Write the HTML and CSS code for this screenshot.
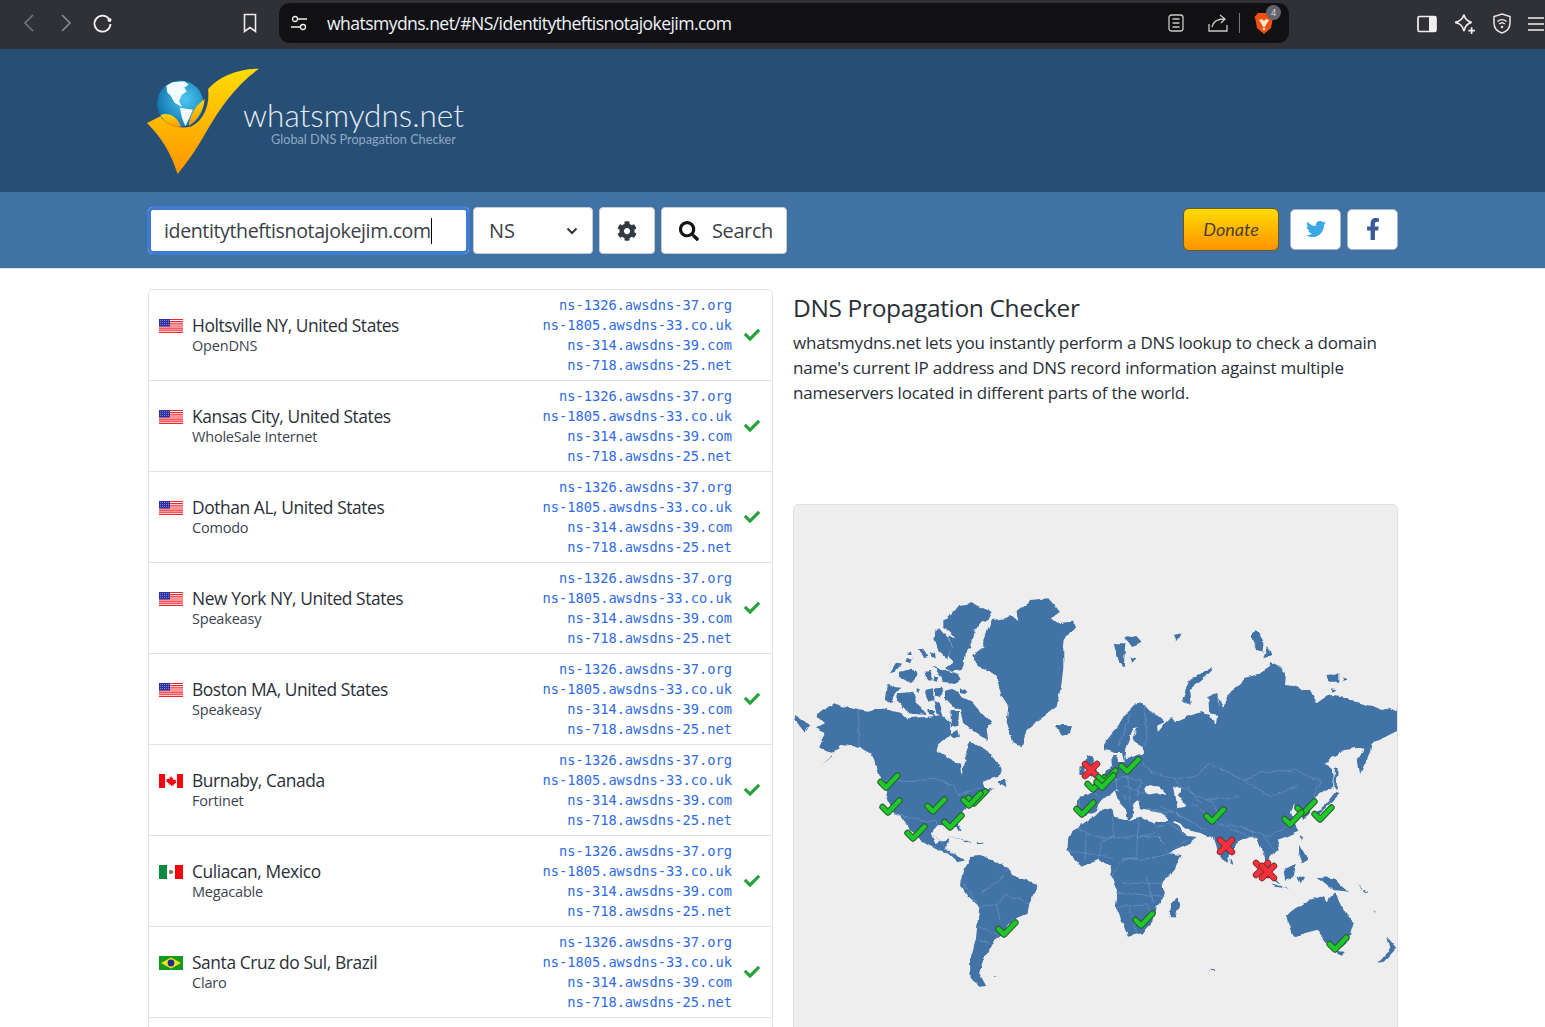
FILE: index.html
```html
<!DOCTYPE html>
<html lang="en">
<head>
<meta charset="utf-8">
<title>whatsmydns.net</title>
<link rel="stylesheet" href="styles.css">
</head>
<body>
<svg class="defs" width="0" height="0" aria-hidden="true">
  <defs>
    <symbol id="ok" viewBox="0 0 512 512"><path d="M173.898 439.404l-166.4-166.4c-9.997-9.997-9.997-26.206 0-36.204l36.203-36.204c9.997-9.998 26.207-9.998 36.204 0L192 312.69 432.095 72.596c9.997-9.997 26.207-9.997 36.204 0l36.203 36.204c9.997 9.997 9.997 26.206 0 36.204l-294.4 294.401c-9.998 9.997-26.207 9.997-36.204-.001z"/></symbol>
    <symbol id="us" viewBox="0 0 24 14">
      <rect width="24" height="14" fill="#fff"/>
      <path d="M0 .5h24M0 2.7h24M0 4.8h24M0 7h24M0 9.1h24M0 11.2h24M0 13.4h24" stroke="#f0262c" stroke-width="1.2"/>
      <rect width="11" height="7.5" fill="#2b2fa8"/>
      <path d="M1 1.5h9M1 3.5h9M1 5.5h9" stroke="#aab" stroke-width=".7" stroke-dasharray="1 1"/>
    </symbol>
    <symbol id="ca" viewBox="0 0 24 14">
      <rect width="24" height="14" fill="#fff"/>
      <rect width="6" height="14" fill="#f5070f"/><rect x="18" width="6" height="14" fill="#f5070f"/>
      <path d="M12 2l1 2 1.200-.6-.5 2.800 1.500-1 .5 1 1.500-.2-.5 1.800.7.500-2.900 2.200.2 1.200-2.200-.3V12h-.6v-1.600l-2.200.3.200-1.200-2.900-2.200.7-.5-.5-1.800 1.500.2.500-1 1.500 1-.5-2.800L11 4z" fill="#f5070f"/>
    </symbol>
    <symbol id="mx" viewBox="0 0 24 14">
      <rect width="24" height="14" fill="#fff"/>
      <rect width="8" height="14" fill="#0a8a3e"/><rect x="16" width="8" height="14" fill="#f5070f"/>
      <circle cx="12" cy="7" r="2" fill="#7d6a4f"/>
    </symbol>
    <symbol id="br" viewBox="0 0 24 14">
      <rect width="24" height="14" fill="#149a1e"/>
      <path d="M12 1.500L22 7 12 12.500 2 7z" fill="#f7e017"/>
      <circle cx="12" cy="7" r="3.400" fill="#1b2f8f"/>
    </symbol>
    <symbol id="mk-ok" viewBox="0 0 24 20">
      <path d="M3.500 11l5.500 5.500L20.500 4.500" fill="none" stroke="#2c5b2f" stroke-width="6.400" stroke-linecap="round" stroke-linejoin="round"/>
      <path d="M3.500 11l5.500 5.500L20.500 4.500" fill="none" stroke="#1fc82a" stroke-width="4.400" stroke-linecap="round" stroke-linejoin="round"/>
    </symbol>
    <symbol id="mk-no" viewBox="0 0 20 20">
      <path d="M4 4l12 12M16 4L4 16" fill="none" stroke="#7a2a2a" stroke-width="6.400" stroke-linecap="round"/>
      <path d="M4 4l12 12M16 4L4 16" fill="none" stroke="#f5303a" stroke-width="4.600" stroke-linecap="round"/>
    </symbol>
    <linearGradient id="logo-gold" x1="0" y1="0" x2="0" y2="1">
      <stop offset="0" stop-color="#ffdc00"/><stop offset="1" stop-color="#ff9500"/>
    </linearGradient>
    <radialGradient id="logo-globe" cx=".6" cy=".4" r=".7">
      <stop offset="0" stop-color="#4cc8f0"/><stop offset="1" stop-color="#0c6aa8"/>
    </radialGradient>
    <filter id="rough" x="0" y="0" width="1" height="1" color-interpolation-filters="sRGB">
      <feTurbulence type="fractalNoise" baseFrequency=".13" numOctaves="2" seed="4"/>
      <feDisplacementMap in="SourceGraphic" scale="4.500" xChannelSelector="R" yChannelSelector="G"/>
    </filter>
  </defs>
</svg>

<div class="page">
  <div class="chrome">
    <div class="nav-icons">
      <svg class="ic" width="22" height="24" viewBox="0 0 22 24"><path d="M15 4L7 12l8 8" fill="none" stroke="#77787d" stroke-width="1.600"/></svg>
      <svg class="ic" width="22" height="24" viewBox="0 0 22 24"><path d="M7 4l8 8-8 8" fill="none" stroke="#8a8b90" stroke-width="1.600"/></svg>
      <svg class="ic" width="22" height="24" viewBox="0 0 22 24"><path d="M17 8a8 8 0 1 0 1.500 5" fill="none" stroke="#f2f2f2" stroke-width="1.800"/><circle cx="17.500" cy="9" r="2" fill="#f2f2f2"/></svg>
    </div>
    <svg class="ic bookmark" width="16" height="20" viewBox="0 0 16 20"><path d="M2.500 1.500h11v17L8 14.500l-5.500 4z" fill="none" stroke="#ececec" stroke-width="1.600"/></svg>
    <div class="urlbar">
      <svg class="ic" width="18" height="16" viewBox="0 0 18 16"><circle cx="5" cy="4" r="2.500" fill="none" stroke="#eee" stroke-width="1.300"/><path d="M8 4h9M1 12h9" stroke="#eee" stroke-width="1.300"/><circle cx="13" cy="12" r="2.500" fill="none" stroke="#eee" stroke-width="1.300"/></svg>
      <span class="url">whatsmydns.net/#NS/identitytheftisnotajokejim.com</span>
      <span class="url-actions">
        <svg class="ic" width="16" height="18" viewBox="0 0 16 18"><rect x="1" y="1" width="14" height="16" rx="2.500" fill="none" stroke="#c9c9c9" stroke-width="1.300"/><path d="M4.500 5h7M4.500 9h7M4.500 13h7" stroke="#c9c9c9" stroke-width="1.300"/></svg>
        <svg class="ic" width="20" height="18" viewBox="0 0 20 18"><path d="M1 10v7h18v-6" fill="none" stroke="#c9c9c9" stroke-width="1.300"/><path d="M4 13c1-5 5-8 12-8M12 1l5 4-4 4" fill="none" stroke="#c9c9c9" stroke-width="1.300"/></svg>
        <span class="sep"></span>
        <span class="brave">
          <svg class="ic" width="20" height="23" viewBox="0 0 20 23"><path d="M4 1h12l3.500 4-1 3-1.500 8-7 6-7-6-1.500-8-1-3z" fill="#f0500f"/><path d="M5 8l3-1 2 2 2-2 3 1-2.500 4L10 16l-2.500-4zM8 17l2 1.500 2-1.500-2-1z" fill="#ffe3d3"/></svg>
          <span class="badge">4</span>
        </span>
      </span>
    </div>
    <div class="tool-icons">
      <svg class="ic" width="20" height="18" viewBox="0 0 20 18"><rect x="1" y="1.500" width="18" height="15" rx="1.500" fill="none" stroke="#f0f0f0" stroke-width="1.700"/><rect x="12" y="1.500" width="7" height="15" fill="#f0f0f0"/></svg>
      <svg class="ic" width="22" height="22" viewBox="0 0 20 20"><path d="M9 1.500c1 4 3 6 7 7-4 1-6 3-7 8-1-5-3-7-8-8 5-1 7-3 8-7z" fill="none" stroke="#f0f0f0" stroke-width="1.500"/><path d="M16 13v6M13 16h6" stroke="#f0f0f0" stroke-width="1.500"/></svg>
      <svg class="ic" width="18" height="21" viewBox="0 0 18 21"><path d="M9 1l8 2.500V10c0 5-3.500 8.500-8 10-4.500-1.500-8-5-8-10V3.500z" fill="none" stroke="#e8e8e8" stroke-width="1.500"/><path d="M4.500 8.500c2.500-2.500 6.500-2.500 9 0M6.200 11c1.600-1.500 4-1.500 5.600 0" fill="none" stroke="#e8e8e8" stroke-width="1.400"/><circle cx="9" cy="14" r="1.200" fill="#e8e8e8"/></svg>
      <svg class="ic" width="16" height="16" viewBox="0 0 16 16"><path d="M0 2h16M0 8h16M0 14h16" stroke="#f0f0f0" stroke-width="1.600"/></svg>
    </div>
  </div>

  <header class="masthead">
    <div class="wrap logo">
      <svg class="logo-mark" width="114" height="108" viewBox="55 40 330 318">
        <path d="M55 205L95 185C110 210 150 225 185 215C225 195 240 150 235 105C265 70 320 45 385 45C320 90 270 160 230 230C200 285 170 325 145 355C125 290 95 245 55 205Z" fill="url(#logo-gold)"/>
        <circle cx="153" cy="148" r="68" fill="url(#logo-globe)"/>
        <path d="M112 95L130 85L165 82L178 92L165 100L172 112L158 122L150 140L158 158L136 145L125 125L115 115Z" fill="#f2fbff"/>
        <path d="M152 160L190 166L180 190L168 214L158 190Z" fill="#f2fbff"/>
        <path d="M95 182C115 172 145 185 155 216C130 218 108 205 95 182Z" fill="url(#logo-gold)"/>
        <path d="M225 135C222 170 200 200 178 214C182 180 200 150 225 135Z" fill="url(#logo-gold)"/>
      </svg>
      <div class="logo-text">
        <span class="logo-name">whatsmydns.net</span>
        <span class="logo-sub">Global DNS Propagation Checker</span>
      </div>
    </div>
  </header>

  <div class="searchbar">
    <div class="wrap search-row">
      <div class="host-input"><span class="typed">identitytheftisnotajokejim.com</span></div>
      <div class="btn type-select"><span>NS</span><svg width="12" height="8" viewBox="0 0 12 8"><path d="M1.500 1.500L6 6l4.500-4.500" fill="none" stroke="#333" stroke-width="2"/></svg></div>
      <div class="btn gear"><svg width="20" height="20" viewBox="0 0 512 512"><path fill="#333a40" d="M487.4 315.700l-42.600-24.600c4.300-23.200 4.300-47 0-70.200l42.600-24.600c4.900-2.800 7.100-8.600 5.500-14-11.100-35.600-30-67.800-54.700-94.600-3.800-4.100-10-5.100-14.800-2.300L380.800 110c-17.900-15.400-38.500-27.300-60.800-35.100V25.800c0-5.600-3.900-10.500-9.400-11.700-36.700-8.200-74.300-7.800-109.200 0-5.500 1.200-9.400 6.100-9.400 11.700V75c-22.200 7.900-42.800 19.800-60.800 35.100L88.700 85.500c-4.900-2.800-11-1.900-14.800 2.300-24.700 26.700-43.600 58.900-54.700 94.600-1.700 5.400.6 11.200 5.500 14L67.300 221c-4.300 23.200-4.300 47 0 70.200l-42.600 24.600c-4.900 2.800-7.100 8.600-5.500 14 11.100 35.600 30 67.800 54.700 94.600 3.800 4.100 10 5.100 14.800 2.300l42.600-24.600c17.900 15.400 38.500 27.300 60.800 35.100v49.200c0 5.600 3.900 10.500 9.400 11.700 36.700 8.200 74.300 7.800 109.200 0 5.500-1.200 9.400-6.100 9.400-11.700v-49.200c22.200-7.900 42.800-19.800 60.800-35.100l42.600 24.600c4.900 2.800 11 1.900 14.800-2.300 24.700-26.700 43.600-58.900 54.700-94.600 1.500-5.500-.7-11.300-5.600-14.100zM256 336c-44.100 0-80-35.900-80-80s35.900-80 80-80 80 35.900 80 80-35.900 80-80 80z"/></svg></div>
      <div class="btn search"><svg width="20" height="20" viewBox="0 0 512 512"><path fill="#111" d="M505 442.700L405.300 343c-4.500-4.500-10.600-7-17-7H372c27.600-35.300 44-79.700 44-128C416 93.100 322.900 0 208 0S0 93.100 0 208s93.100 208 208 208c48.300 0 92.700-16.400 128-44v16.300c0 6.400 2.500 12.500 7 17l99.700 99.700c9.400 9.400 24.600 9.400 33.900 0l28.300-28.300c9.400-9.400 9.400-24.600.1-34zM208 336c-70.700 0-128-57.200-128-128 0-70.700 57.200-128 128-128 70.700 0 128 57.200 128 128 0 70.700-57.200 128-128 128z"/></svg><span>Search</span></div>
      <div class="socials">
        <div class="donate">Donate</div>
        <div class="social"><svg width="20" height="20" viewBox="0 0 512 512"><path fill="#3aa9e6" d="M459.370 151.716c.325 4.548.325 9.097.325 13.645 0 138.720-105.583 298.558-298.558 298.558-59.452 0-114.680-17.219-161.137-47.106 8.447.974 16.568 1.299 25.340 1.299 49.055 0 94.213-16.568 130.274-44.832-46.132-.975-84.792-31.188-98.112-72.772 6.498.974 12.995 1.624 19.818 1.624 9.421 0 18.843-1.300 27.614-3.573-48.081-9.747-84.143-51.980-84.143-102.985v-1.299c13.969 7.797 30.214 12.670 47.431 13.319-28.264-18.843-46.781-51.005-46.781-87.391 0-19.492 5.197-37.360 14.294-52.954 51.655 63.675 129.300 105.258 216.365 109.807-1.624-7.797-2.599-15.918-2.599-24.040 0-57.828 46.782-104.934 104.934-104.934 30.213 0 57.502 12.670 76.670 33.137 23.715-4.548 46.456-13.320 66.599-25.340-7.798 24.366-24.366 44.833-46.132 57.827 21.117-2.273 41.584-8.122 60.426-16.243-14.292 20.791-32.161 39.308-52.628 54.253z"/></svg></div>
        <div class="social"><svg width="14" height="22" viewBox="0 0 320 512"><path fill="#3b5998" d="M279.140 288l14.220-92.660h-88.910v-60.130c0-25.350 12.420-50.060 52.240-50.060h40.420V6.260S260.430 0 225.360 0c-73.220 0-121.080 44.380-121.080 124.720v70.620H22.890V288h81.390v224h100.170V288z"/></svg></div>
      </div>
    </div>
  </div>

  <main class="wrap content">
    <section class="results">
      <article class="row"><svg class="flag"><use href="#us"/></svg><div class="place"><div class="city">Holtsville NY, United States</div><div class="isp">OpenDNS</div></div><div class="records"><div>ns-1326.awsdns-37.org</div><div>ns-1805.awsdns-33.co.uk</div><div>ns-314.awsdns-39.com</div><div>ns-718.awsdns-25.net</div></div><svg class="tick"><use href="#ok"/></svg></article>
      <article class="row"><svg class="flag"><use href="#us"/></svg><div class="place"><div class="city">Kansas City, United States</div><div class="isp">WholeSale Internet</div></div><div class="records"><div>ns-1326.awsdns-37.org</div><div>ns-1805.awsdns-33.co.uk</div><div>ns-314.awsdns-39.com</div><div>ns-718.awsdns-25.net</div></div><svg class="tick"><use href="#ok"/></svg></article>
      <article class="row"><svg class="flag"><use href="#us"/></svg><div class="place"><div class="city">Dothan AL, United States</div><div class="isp">Comodo</div></div><div class="records"><div>ns-1326.awsdns-37.org</div><div>ns-1805.awsdns-33.co.uk</div><div>ns-314.awsdns-39.com</div><div>ns-718.awsdns-25.net</div></div><svg class="tick"><use href="#ok"/></svg></article>
      <article class="row"><svg class="flag"><use href="#us"/></svg><div class="place"><div class="city">New York NY, United States</div><div class="isp">Speakeasy</div></div><div class="records"><div>ns-1326.awsdns-37.org</div><div>ns-1805.awsdns-33.co.uk</div><div>ns-314.awsdns-39.com</div><div>ns-718.awsdns-25.net</div></div><svg class="tick"><use href="#ok"/></svg></article>
      <article class="row"><svg class="flag"><use href="#us"/></svg><div class="place"><div class="city">Boston MA, United States</div><div class="isp">Speakeasy</div></div><div class="records"><div>ns-1326.awsdns-37.org</div><div>ns-1805.awsdns-33.co.uk</div><div>ns-314.awsdns-39.com</div><div>ns-718.awsdns-25.net</div></div><svg class="tick"><use href="#ok"/></svg></article>
      <article class="row"><svg class="flag"><use href="#ca"/></svg><div class="place"><div class="city">Burnaby, Canada</div><div class="isp">Fortinet</div></div><div class="records"><div>ns-1326.awsdns-37.org</div><div>ns-1805.awsdns-33.co.uk</div><div>ns-314.awsdns-39.com</div><div>ns-718.awsdns-25.net</div></div><svg class="tick"><use href="#ok"/></svg></article>
      <article class="row"><svg class="flag"><use href="#mx"/></svg><div class="place"><div class="city">Culiacan, Mexico</div><div class="isp">Megacable</div></div><div class="records"><div>ns-1326.awsdns-37.org</div><div>ns-1805.awsdns-33.co.uk</div><div>ns-314.awsdns-39.com</div><div>ns-718.awsdns-25.net</div></div><svg class="tick"><use href="#ok"/></svg></article>
      <article class="row"><svg class="flag"><use href="#br"/></svg><div class="place"><div class="city">Santa Cruz do Sul, Brazil</div><div class="isp">Claro</div></div><div class="records"><div>ns-1326.awsdns-37.org</div><div>ns-1805.awsdns-33.co.uk</div><div>ns-314.awsdns-39.com</div><div>ns-718.awsdns-25.net</div></div><svg class="tick"><use href="#ok"/></svg></article>
      <div class="row row-empty"></div>
    </section>

    <section class="about">
      <h1>DNS Propagation Checker</h1>
      <p>whatsmydns.net lets you instantly perform a DNS lookup to check a domain name's current IP address and DNS record information against multiple nameservers located in different parts of the world.</p>
      <div class="map">
        <svg class="map-svg" viewBox="794 505 603 540" role="img" aria-label="World map">
          <g class="geo" filter="url(#rough)">
          <rect x="794" y="505" width="603" height="540" class="sea"/>
          <g class="land">
            <path d="M1105 745L1110 735L1117 727L1122 718L1127 712L1134 705L1141 703L1146 707L1151 712L1158 716L1165 722L1156 726L1157 733L1163 726L1171 718L1174 722L1186 717L1201 712L1209 715L1216 725L1219 697L1223 708L1228 697L1233 688L1241 685L1245 678L1255 675L1265 670L1271 662L1279 666L1286 673L1285 685L1293 686L1302 690L1310 690L1317 703L1324 698L1332 695L1340 696L1349 698L1357 703L1364 705L1373 706L1382 710L1390 708L1399 713L1399 730L1385 737L1374 742L1364 750L1355 748L1345 750L1335 756L1325 763L1332 768L1334 778L1333 787L1325 790L1318 795L1310 803L1310 813L1303 820L1300 811L1294 805L1291 812L1294 823L1299 832L1288 836L1277 840L1280 850L1272 854L1268 858L1270 870L1265 866L1263 853L1257 838L1250 837L1243 840L1237 843L1231 853L1226 863L1222 858L1218 852L1214 837L1206 836L1197 832L1187 830L1175 820L1171 822L1165 815L1160 812L1150 810L1140 808L1138 800L1135 803L1130 812L1125 798L1117 788L1110 795L1103 798L1099 806L1095 812L1085 816L1075 810L1080 797L1093 793L1090 787L1100 780L1105 771L1113 767L1112 755L1117 755L1118 762L1124 762L1122 753L1115 753L1105 750Z"/>
            <path d="M1155 823L1171 820L1181 828L1187 836L1197 837L1188 845L1169 853L1162 842L1155 828Z"/>
            <path d="M1115 791L1120 790L1131 808L1135 812L1128 820L1126 810L1118 800Z"/>
            <g transform="translate(795,590) scale(.3333)">
              <path d="M705 30L760 25L795 65L770 85L790 100L835 95L838 115L805 150L805 230L800 280L785 350L720 400L695 420L680 472L655 460L635 395L640 350L620 320L605 260L545 225L535 195L565 170L565 150L590 90L630 85L645 75L670 95L665 65L700 40Z"/>
              <path d="M445 90L470 70L490 45L530 40L590 65L580 85L555 100L535 130L525 170L510 190L505 225L500 240L470 245L450 235L475 215L460 195L470 175L460 140L485 145L445 110Z"/>
              <path d="M420 125L435 115L460 145L470 175L455 205L430 180L415 150Z"/>
              <path d="M372 178L385 176L400 200L388 205ZM405 185L420 188L422 205L410 205ZM285 250L305 218L318 225L300 245ZM335 205L350 205L345 218L332 215ZM338 188L348 185L350 195L338 195ZM312 245L340 240L350 235L368 255L345 280L330 270L312 260ZM388 242L408 240L410 272L395 270ZM418 260L430 265L425 278L415 275ZM415 228L440 240L490 255L498 270L480 282L445 275L430 250ZM275 285L315 290L300 320L285 340L270 330ZM310 310L355 305L365 340L395 375L340 370L320 345L305 330ZM388 300L415 295L415 330L400 335ZM420 292L445 290L435 325L420 318ZM365 295L375 298L372 308L365 305ZM415 330L430 335L445 385L425 370ZM400 360L420 360L415 375L402 372ZM495 295L518 305L510 312L495 310ZM780 405L830 405L825 430L800 438Z"/>
              <path d="M450 300L470 295L500 320L530 335L560 370L590 400L575 420L580 450L560 440L530 420L505 405L495 355L470 350L450 330ZM467 360L492 360L490 405L467 410Z"/>
              <path d="M65 375L115 340L150 350L190 360L215 365L260 355L320 370L335 385L400 380L440 375L465 400L465 435L430 465L425 485L470 510L495 525L500 555L505 525L515 510L510 480L525 455L575 480L620 535L610 560L560 575L550 590L570 600L600 595L560 620L530 640L500 670L420 670L300 640L280 620L258 570L245 530L225 490L190 470L135 465L110 500L75 525L120 490L95 485L70 470L90 430L60 415L90 400Z"/>
              <path d="M0 375L45 405L30 428L0 390ZM610 570L630 570L635 590L615 585ZM465 430L490 420L495 440L475 445Z"/>
            </g>
            <g transform="translate(860,780) scale(.3457,.3333)">
              <path d="M80 0L350 0L365 30L340 50L315 75L300 90L280 125L295 155L285 150L265 130L225 135L205 160L218 192L250 178L258 175L255 195L240 205L275 225L302 240L285 247L262 225L215 202L170 178L130 125L115 105L100 100L85 70L75 40Z"/>
              <path d="M255 170L310 180L325 190L290 178ZM335 185L360 190L340 193ZM388 588L400 588L398 592L388 592Z"/>
              <path d="M315 228L345 225L385 240L430 265L440 285L510 312L512 330L490 370L485 400L440 420L405 470L390 480L375 510L355 540L345 580L365 618L345 620L320 590L318 540L335 480L345 380L310 345L288 310L300 270L315 250Z"/>
              <path d="M640 135L680 105L700 85L730 90L735 110L780 120L810 110L850 130L870 180L895 220L930 225L910 270L875 310L880 350L855 380L850 420L815 460L775 470L760 430L740 380L745 340L728 290L725 260L690 240L640 260L600 210L603 170L625 145Z"/>
              <path d="M920 350L925 370L912 412L896 412L900 370Z"/>
              <path d="M1155 250L1195 285L1215 310L1195 300L1165 270ZM1190 310L1245 328L1200 320ZM1225 270L1260 255L1255 290L1230 300ZM1265 290L1285 290L1275 310ZM1320 290L1370 295L1415 335L1370 330L1340 305ZM1270 195L1295 240L1280 250L1270 220ZM1275 165L1282 170L1278 182ZM1072 235L1080 250L1072 252ZM1015 567L1025 567L1025 573L1015 573ZM1260 290L1270 292L1268 305ZM1435 312L1470 335L1465 337ZM1485 390L1495 398L1490 398Z"/>
              <path d="M1245 395L1300 360L1345 345L1350 365L1375 340L1395 385L1428 430L1410 490L1385 505L1350 490L1320 450L1250 470L1235 405ZM1378 510L1402 512L1395 527L1382 525Z"/>
              <path d="M1525 470L1552 505L1515 545L1495 548L1535 510Z"/>
              <path d="M1375 35L1390 40L1370 60L1340 90L1320 120L1315 100L1345 75Z"/>
            </g>
            <g transform="translate(1060,590) scale(.3353,.3333)">
              <path d="M930 450L925 485L895 552L888 510L905 480ZM820 530L828 535L825 600L818 590Z"/>
              <path d="M160 160L195 160L190 232L175 215ZM195 145L225 135L243 155L215 170ZM210 200L228 205L215 218ZM335 135L360 130L350 150ZM450 235L385 270L365 330L390 345L385 300L450 245ZM465 310L470 310L472 375L445 370L442 320ZM570 140L585 118L605 150L608 185L585 180ZM620 172L635 195L608 205ZM795 255L830 250L830 275L800 275ZM840 262L860 272L845 275ZM810 295L825 298L812 305Z"/>
              <path d="M80 492L95 500L105 530L115 555L70 565L85 535L75 520ZM58 530L75 525L72 552L58 555Z"/>
              <path d="M0 100L35 95L45 110L10 150L0 250ZM0 405L35 405L25 435L0 435Z"/>
            </g>
          </g>
          <g class="water">
            <path d="M1143 789L1150 785L1160 788L1166 794L1158 793L1148 795Z"/>
            <g transform="translate(1060,590) scale(.3353,.3333)">
              <path d="M192 505L195 475L220 415L232 412L215 450L250 472L250 490L215 500Z"/>
              <path d="M340 590L365 590L355 615L375 650L350 655L345 620Z"/>
            </g>
          </g>
          <g class="borders">
            <g transform="translate(795,590) scale(.3333)">
              <path d="M192 360L192 470M255 568L310 572L420 568L480 590L490 620L520 605L555 590"/>
            </g>
            <g transform="translate(860,780) scale(.3457,.3333)">
              <path d="M115 105L170 120L215 125L245 150M210 160L240 195L275 225"/>
              <path d="M345 380L395 370L405 420M345 380L300 310M350 340L400 300L430 265M400 370L420 345L490 370M345 440L405 470M335 480L380 490"/>
              <path d="M625 145L700 175L800 170L855 160M730 110L735 170L700 185L690 240M805 115L800 235L760 240L730 290M760 240L850 235L895 220M800 170L870 170M760 310L875 310M745 340L840 345L880 350M745 380L830 375L850 420M655 160L650 240M600 210L730 235M830 290L850 370M780 380L800 460M855 145L895 130L945 170M895 220L945 180"/>
              <path d="M960 70L1040 130L1130 170M1065 130L1180 170L1250 130M1170 170L1200 210M1000 60L1100 50M915 100L1000 150M830 85L910 100"/>
            </g>
            <g transform="translate(1060,590) scale(.3353,.3333)">
              <path d="M210 370L175 470M250 345L260 440M260 440L250 470M240 510L270 545L345 570L400 560L450 520L545 570L600 548L700 540L780 575L745 640M545 570L630 620L710 590M340 570L375 600L460 640L470 680M120 600L180 560L240 570L260 590M160 530L170 590M200 545L210 640M240 570L230 620M60 620L60 680M100 610L130 625M190 590L260 610M380 590L420 640M300 650L370 680"/>
            </g>
          </g>
          </g>
          <g class="markers">
            <use href="#mk-ok" x="877" y="771" width="24" height="20"/>
            <use href="#mk-ok" x="879" y="796" width="24" height="20"/>
            <use href="#mk-ok" x="924" y="795" width="24" height="20"/>
            <use href="#mk-ok" x="965" y="787" width="24" height="20"/>
            <use href="#mk-ok" x="960" y="789" width="24" height="20"/>
            <use href="#mk-ok" x="941" y="811" width="24" height="20"/>
            <use href="#mk-ok" x="904" y="822" width="24" height="20"/>
            <use href="#mk-no" x="1081" y="760" width="20" height="20"/>
            <use href="#mk-ok" x="1118" y="755" width="24" height="20"/>
            <use href="#mk-ok" x="1084" y="773" width="24" height="20"/>
            <use href="#mk-ok" x="1095" y="766" width="24" height="20"/>
            <use href="#mk-ok" x="1093" y="771" width="24" height="20"/>
            <use href="#mk-ok" x="1073" y="798" width="24" height="20"/>
            <use href="#mk-ok" x="1203" y="805" width="24" height="20"/>
            <use href="#mk-ok" x="1294" y="797" width="24" height="20"/>
            <use href="#mk-ok" x="1281" y="808" width="24" height="20"/>
            <use href="#mk-ok" x="1311" y="803" width="24" height="20"/>
            <use href="#mk-no" x="1216" y="836" width="20" height="20"/>
            <use href="#mk-no" x="1252" y="859" width="20" height="20"/>
            <use href="#mk-no" x="1258" y="862" width="20" height="20"/>
            <use href="#mk-ok" x="995" y="918" width="24" height="20"/>
            <use href="#mk-ok" x="1132" y="909" width="24" height="20"/>
            <use href="#mk-ok" x="1326" y="933" width="24" height="20"/>
          </g>
        </svg>
      </div>
    </section>
  </main>
</div>
</body>
</html>
```

FILE: styles.css
```css
* { box-sizing: border-box; }
html, body { height: 100%; margin: 0; overflow: hidden; }
body { font-family: "Open Sans", "Liberation Sans", sans-serif; color: #212529; background: #fff; }
.defs { position: absolute; }
.ic { display: block; flex: none; }
.wrap { width: 1250px; margin-left: 148px; }

.chrome { height: 49px; background: #303136; display: flex; align-items: center; padding-left: 18px; }
.nav-icons { display: flex; gap: 15px; width: 224px; margin-top: -4px; }
.bookmark { margin-right: 21px; margin-top: -3px; }
.urlbar { width: 1010px; height: 40px; margin-top: -3px; background: #111113; border-radius: 11px; display: flex; align-items: center; padding: 0 15px 0 11px; color: #eef3f8; }
.url { margin-left: 19px; margin-top: -1px; font-size: 17.600px; letter-spacing: -.58px; flex: 1; white-space: nowrap; }
.url-actions { display: flex; align-items: center; gap: 24px; }
.sep { width: 1px; height: 20px; background: #77787c; margin: 0 -10px 0 -13px; }
.brave { position: relative; display: block; }
.badge { position: absolute; left: 12px; top: -7px; width: 15px; height: 15px; border-radius: 50%; background: #62636e; color: #ddd; font-size: 9px; line-height: 15px; text-align: center; }
.tool-icons { display: flex; align-items: center; gap: 17px; margin-left: 128px; margin-top: -2px; }

.masthead { height: 143px; background: #274e74; }
.logo { display: flex; height: 143px; padding-top: 18px; margin-left: 146px; }
.logo-mark { flex: none; }
.logo-text { margin-left: -17px; padding-top: 30px; display: flex; flex-direction: column; }
.logo-name { font-family: Lato, sans-serif; font-weight: 300; font-size: 31.500px; line-height: 36px; color: #e4ebf2; white-space: nowrap; }
.logo-sub { font-family: Lato, sans-serif; font-size: 12.700px; line-height: 16px; color: #8fa9c3; margin-left: 28px; margin-top: -2px; white-space: nowrap; }

.searchbar { height: 77px; background: #4172a5; border-bottom: 1px solid #dfe5ec; }
.search-row { display: flex; align-items: flex-start; padding-top: 15px; }
.host-input { width: 321px; height: 47px; background: #fff; border: 2px solid #fff; outline: 3px solid #3f7bd0; outline-offset: -3px; border-radius: 5px; padding: 0 14px; display: flex; align-items: center; font-size: 19.600px; letter-spacing: -.4px; color: #3a4148; box-shadow: 0 0 0 1px #3f7bd0; }
.typed { border-right: 1px solid #000; white-space: nowrap; line-height: 26px; }
.btn { height: 47px; margin-top: 0; background: #fff; border: 1px solid #c8cdd3; border-radius: 4px; display: flex; align-items: center; color: #3a4148; font-size: 20px; flex: none; }
.type-select { width: 120px; margin-left: 4px; padding: 0 14px 0 15px; justify-content: space-between; }
.gear { width: 56px; margin-left: 6px; justify-content: center; }
.search { width: 126px; margin-left: 6px; padding-left: 17px; gap: 13px; font-weight: 500; letter-spacing: -.4px; }
.socials { margin-left: auto; margin-top: -1px; display: flex; align-items: center; gap: 6px; height: 46px; }
.donate { width: 96px; height: 43px; margin-right: 5px; border: 1px solid #6b5a20; border-radius: 6px; background: linear-gradient(#ffdc00, #ff9300); font-family: Lato, sans-serif; font-style: italic; font-size: 18px; line-height: 41px; text-align: center; color: #4a4030; }
.social { width: 51px; height: 41px; background: #fff; border: 1px solid #a9b4c2; border-radius: 5px; display: flex; align-items: center; justify-content: center; }

.content { display: flex; gap: 20px; align-items: flex-start; padding-top: 20px; }
.results { width: 625px; flex: none; border: 1px solid #e5e5e5; border-radius: 5px; }
.row { height: 91px; display: flex; align-items: center; padding: 0 12px 0 10px; border-bottom: 1px solid #e5e5e5; }
.row-empty { border-bottom: 0; }
.flag { width: 24px; height: 14px; flex: none; margin: -18px 9px 0 0; }
.place { flex: 1; min-width: 0; margin-top: -1px; }
.city { font-size: 17.400px; line-height: 22px; letter-spacing: -.42px; color: #2a3038; white-space: nowrap; margin-bottom: 1px; }
.isp { font-size: 14.500px; line-height: 18px; letter-spacing: -.2px; color: #3b4450; white-space: nowrap; }
.records { font-family: "DejaVu Sans Mono", "Liberation Mono", monospace; font-size: 13.700px; line-height: 20px; color: #2e6be6; text-align: right; margin-right: 12px; }
.tick { width: 16px; height: 16px; flex: none; fill: #25a33a; }

.about { width: 605px; flex: none; }
h1 { margin: 0; padding-top: 2px; font-size: 24.500px; line-height: 34px; font-weight: 400; letter-spacing: -.35px; color: #2a3038; white-space: nowrap; }
p { margin: 5px 0 0; font-size: 17px; line-height: 25px; letter-spacing: -.22px; color: #2a3038; }
.map { margin-top: 99px; height: 560px; background: #eee; border: 1px solid #e0e0e0; border-radius: 5px; overflow: hidden; }
.map-svg { display: block; width: 603px; height: 540px; }
.sea { fill: #eee; }
.land { fill: #4273a6; }
.water { fill: #eee; }
.borders { fill: none; stroke: #7fa1c6; stroke-width: 1.500; }
```
